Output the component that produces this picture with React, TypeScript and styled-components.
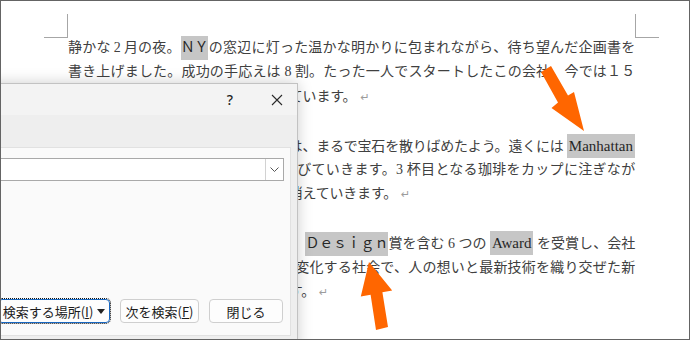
import styled, { createGlobalStyle } from "styled-components";

const GlobalStyle = createGlobalStyle`
  html, body {
    margin: 0;
    padding: 0;
    background: #ffffff;
  }
  body {
    font-family: "Noto Sans CJK JP", sans-serif;
  }
`;

const Page = styled.div`
  position: relative;
  width: 690px;
  height: 340px;
  box-sizing: border-box;
  border: 1px solid #646464;
  overflow: hidden;
  background: #ffffff;
  padding-top: 13px;
`;

const MarkRow = styled.div`
  display: flex;
  justify-content: space-between;
  padding: 0 30px 0 43px;
`;

const Corner = styled.div<{ $side: "left" | "right" }>`
  width: 24px;
  height: 24px;
  box-sizing: border-box;
  border-bottom: 1px solid #a6a6a6;
  ${(p) => (p.$side === "left" ? "border-right: 1px solid #a6a6a6;" : "border-left: 1px solid #a6a6a6;")}
`;

const Body = styled.div`
  margin: -2px 0 0 67px;
  width: 567px;
`;

const Line = styled.div<{ $last?: boolean; $tight?: boolean }>`
  font-family: "Liberation Serif", "Noto Sans CJK JP", serif;
  font-size: 14px;
  line-height: 24.4px;
  height: 24.4px;
  color: #404040;
  letter-spacing: ${(p) => (p.$tight ? "-0.45px" : "-0.2px")};
  text-align: justify;
  text-align-last: ${(p) => (p.$last ? "left" : "justify")};
`;

const Num = styled.span`
  margin: 0 3px;
`;

// gray text highlight; latin words are set a touch larger like the doc's Century font
const Hl = styled.span<{ $latin?: boolean }>`
  display: inline-block;
  line-height: 24px;
  background: #c6c6c6;
  color: #262626;
  font-size: ${(p) => (p.$latin ? "15px" : "14px")};
  letter-spacing: ${(p) => (p.$latin ? "0" : "-0.2px")};
  padding: 0 ${(p) => (p.$latin ? "2px" : "0")};
`;

const Ret = styled.span`
  font-family: "DejaVu Sans", sans-serif;
  font-size: 11px;
  color: #9c9c9c;
  margin-left: 4px;
`;

const Dialog = styled.div`
  position: absolute;
  left: -21px;
  top: 82px;
  width: 318px;
  height: 270px;
  box-sizing: border-box;
  border: 1px solid #c2c2c2;
  background: #eeeeee;
  box-shadow: 0 0 14px rgba(0, 0, 0, 0.2);
  display: flex;
  flex-direction: column;
  font-family: "Noto Sans CJK JP", sans-serif;
`;

const TitleBar = styled.div`
  height: 31px;
  flex-shrink: 0;
  background: #f3f3f3;
  display: flex;
  justify-content: flex-end;
  align-items: center;
  gap: 7px;
`;

const TitleButton = styled.div`
  width: 40px;
  height: 31px;
  display: flex;
  align-items: center;
  justify-content: center;
  font-family: "Noto Sans", sans-serif;
  font-size: 14px;
  font-weight: 500;
  color: #1f1f1f;
`;

const Band = styled.div`
  height: 32px;
  flex-shrink: 0;
  background: #eeeeee;
`;

const Panel = styled.div`
  height: 189px;
  flex-shrink: 0;
  box-sizing: border-box;
  margin-right: 6px;
  background: #fafafa;
  border: 1px solid #e1e1e1;
  padding: 10px 6px 12px 6px;
  display: flex;
  flex-direction: column;
  justify-content: space-between;
`;

const Combo = styled.div`
  height: 23px;
  box-sizing: border-box;
  border: 1px solid #a9a9a9;
  background: #ffffff;
  display: flex;
  justify-content: flex-end;
`;

const ChevronBox = styled.div`
  width: 17px;
  border-left: 1px solid #d2d2d2;
  display: flex;
  align-items: center;
  justify-content: center;
`;

const ButtonRow = styled.div`
  display: flex;
  justify-content: flex-end;
  gap: 10px;
  padding-right: 1px;
`;

const Button = styled.div<{ $w: number; $primary?: boolean }>`
  width: ${(p) => p.$w}px;
  height: 24px;
  box-sizing: border-box;
  border: 1px solid ${(p) => (p.$primary ? "#1867c0" : "#cfcfcf")};
  border-radius: 4px;
  background: #fdfdfd;
  display: flex;
  align-items: center;
  justify-content: center;
  gap: 4px;
  font-size: 13px;
  color: #1b1b1b;
  ${(p) => (p.$primary ? "outline: 1px dotted #111; outline-offset: 0;" : "")}
`;

const Overlay = styled.svg`
  position: absolute;
  left: -1px;
  top: -1px;
  pointer-events: none;
`;

export default function App() {
  return (
    <>
      <GlobalStyle />
      <Page>
        <MarkRow>
          <Corner $side="left" />
          <Corner $side="right" />
        </MarkRow>
        <Body>
          <Line>
            静かな<Num>2</Num>月の夜。<Hl>ＮＹ</Hl>の窓辺に灯った温かな明かりに包まれながら、待ち望んだ企画書を
          </Line>
          <Line>書き上げました。成功の手応えは 8 割。たった一人でスタートしたこの会社。今では１５</Line>
          <Line $last>
            名の仲間とともに世界へ挑戦し続けています。<Ret>↵</Ret>
          </Line>
          <Line $last>
            <Ret>↵</Ret>
          </Line>
          <Line $tight>
            窓の外に広がる摩天楼の夜景の灯りは、まるで宝石を散りばめたよう。遠くには <Hl $latin>Manhattan</Hl>
          </Line>
          <Line>ブルックリン橋の光が川面に長く伸びていきます。3 杯目となる珈琲をカップに注ぎなが</Line>
          <Line $last>
            ら、今日一日の疲れが湯気と一緒に消えていきます。<Ret>↵</Ret>
          </Line>
          <Line $last>
            <Ret>↵</Ret>
          </Line>
          <Line>
            今年は国際的なコンテストにおいて、<Hl>Ｄｅｓｉｇｎ</Hl>賞を含む 6 つの <Hl $latin>Award</Hl> を受賞し、会社
          </Line>
          <Line>の評価はさらに高まりました。日々変化する社会で、人の想いと最新技術を織り交ぜた新</Line>
          <Line $last>
            しい価値をこれからも届けていきます。<Ret>↵</Ret>
          </Line>
        </Body>

        <Dialog>
          <TitleBar>
            <TitleButton>?</TitleButton>
            <TitleButton>
              <svg width="12" height="12" viewBox="0 0 12 12">
                <path d="M1 1 L11 11 M11 1 L1 11" stroke="#2a2a2a" strokeWidth="1.1" fill="none" />
              </svg>
            </TitleButton>
          </TitleBar>
          <Band />
          <Panel>
            <Combo>
              <ChevronBox>
                <svg width="9" height="5" viewBox="0 0 9 5">
                  <path d="M0.5 0.5 L4.5 4.5 L8.5 0.5" stroke="#555" strokeWidth="1" fill="none" />
                </svg>
              </ChevronBox>
            </Combo>
            <ButtonRow>
              <Button $w={112} $primary>
                <span>
                  検索する場所(<u>I</u>)
                </span>
                <svg width="8" height="5" viewBox="0 0 8 5">
                  <path d="M0 0 L8 0 L4 5 Z" fill="#222" />
                </svg>
              </Button>
              <Button $w={79}>
                <span>
                  次を検索(<u>F</u>)
                </span>
              </Button>
              <Button $w={74}>閉じる</Button>
            </ButtonRow>
          </Panel>
        </Dialog>

        <Overlay width="690" height="340" viewBox="0 0 690 340">
          <polygon
            points="541,72 551,66 568,95.5 574,92 584,131 551.5,108 558,102.5"
            fill="#ff6600"
          />
          <polygon
            points="376,330 388,327 382.4,292.3 392.2,290.4 369,262 360.8,296.6 370.6,294.7"
            fill="#ff6600"
          />
        </Overlay>
      </Page>
    </>
  );
}
